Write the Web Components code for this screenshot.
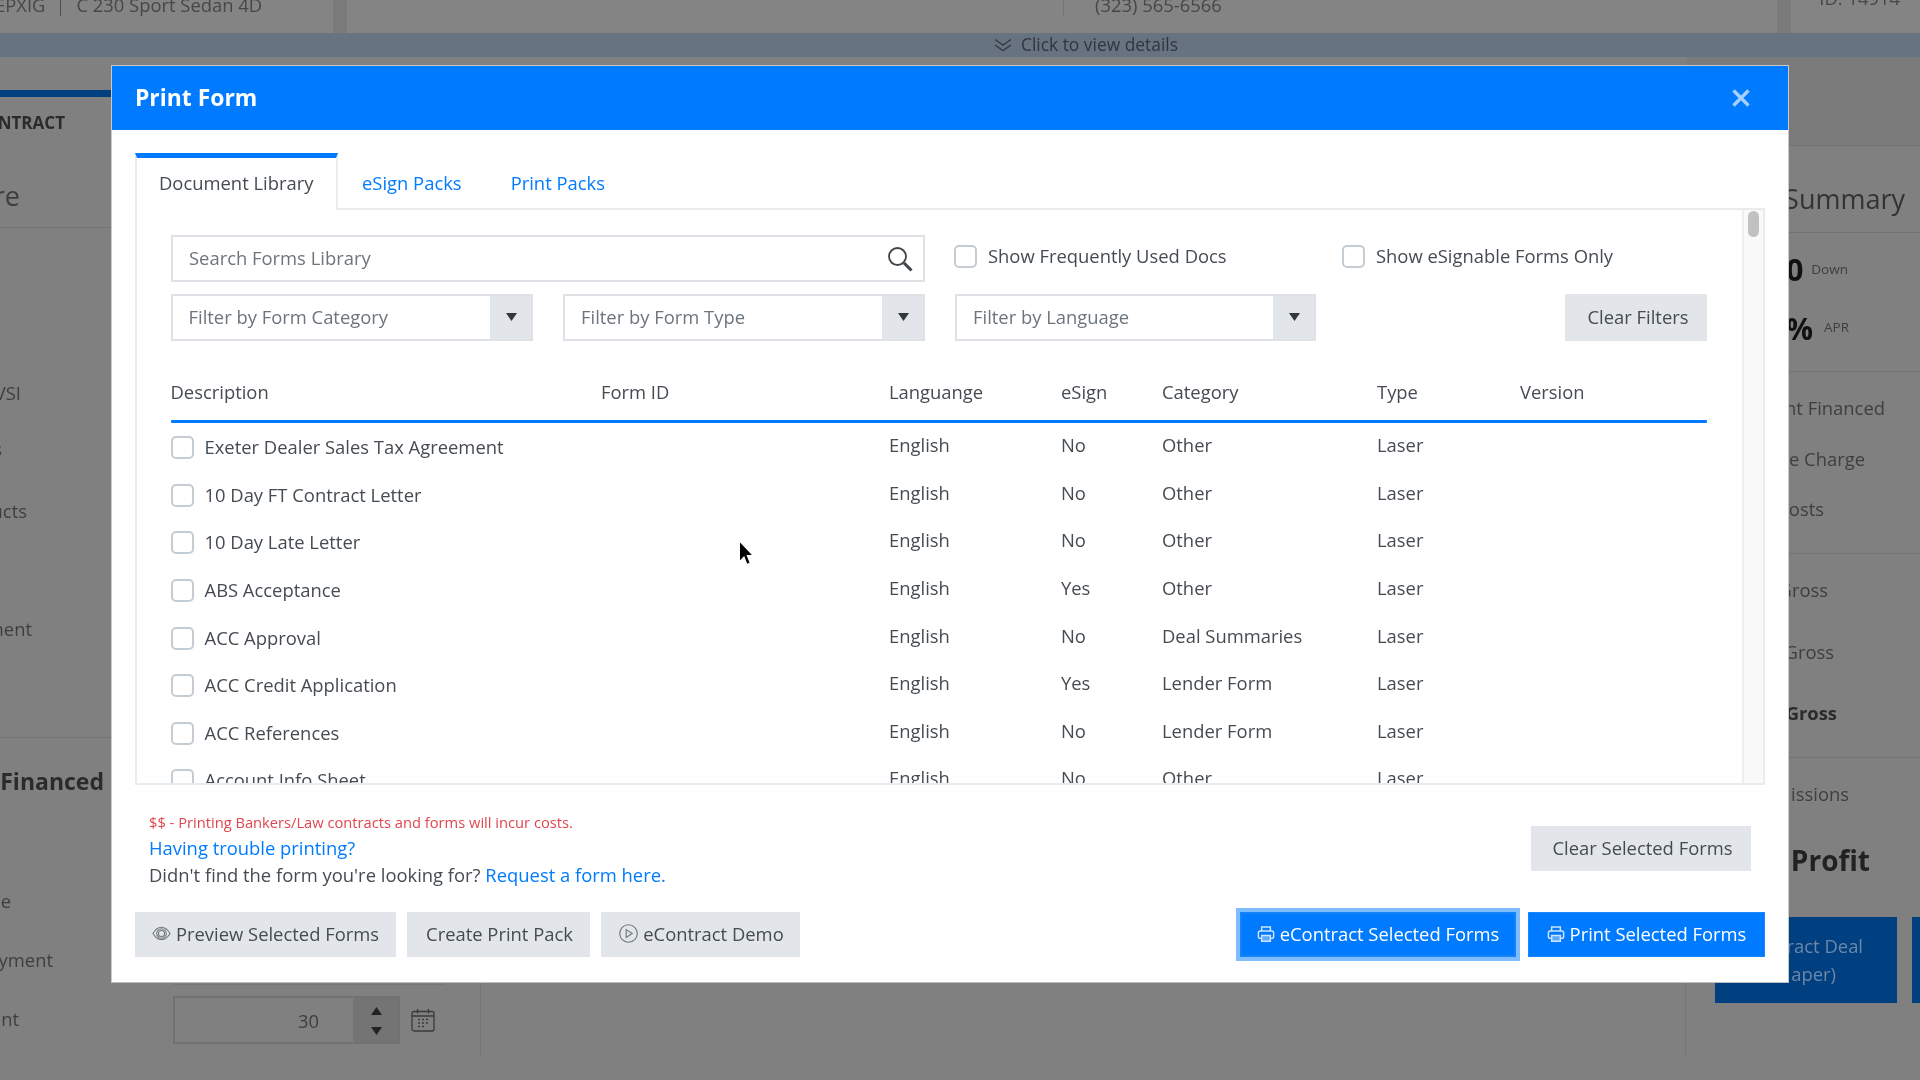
<!DOCTYPE html>
<html lang="en"><head><meta charset="utf-8"><title>Print Form</title>
<style>html,body{margin:0;padding:0;background:#808080;overflow:hidden}</style>
</head><body>
<app-shell>
  <bg-top></bg-top>
  <bg-detail>Click to view details</bg-detail>
  <bg-main></bg-main>
  <print-modal></print-modal>
  <mouse-cursor></mouse-cursor>
</app-shell>
<script>
const FONT='"Open Sans","Liberation Sans",sans-serif';
function def(name,css,html,init){
  customElements.define(name,class extends HTMLElement{
    constructor(){super();const s=this.attachShadow({mode:'open'});
      s.innerHTML='<style>'+css+'</style>'+(typeof html==='function'?html(this):html);}
    connectedCallback(){if(init)init(this)}
  });
}
const PRINTER='<svg width="18" height="16" viewBox="0 0 24 22" fill="none" stroke="currentColor" stroke-width="2"><path d="M6 7V1.500h12V7"/><path d="M6 17H4a2.500 2.500 0 0 1-2.500-2.500v-5A2.500 2.500 0 0 1 4 7h16a2.500 2.500 0 0 1 2.500 2.500v5A2.500 2.500 0 0 1 20 17h-2"/><path d="M6 13h12v8H6z" fill="currentColor" fill-opacity=".45"/></svg>';
const EYE='<svg width="19" height="15" viewBox="0 0 20 15" fill="none" stroke="currentColor" stroke-width="1.100"><path d="M1 7.500C4 2.600 7 1 10 1s6 1.600 9 6.500c-3 4.900-6 6.500-9 6.500S4 12.400 1 7.500Z"/><circle cx="10" cy="7.500" r="5"/><circle cx="10" cy="7.500" r="3.200"/></svg>';
const PLAY='<svg width="19" height="19" viewBox="0 0 19 19" fill="none" stroke="currentColor" stroke-width="1.100"><circle cx="9.500" cy="9.500" r="8.800"/><path d="M7.200 5.600l6 3.900-6 3.900z"/></svg>';

def('app-shell',':host{display:block;position:relative;width:1920px;height:1080px;overflow:hidden;background:#808080;font-family:'+FONT+';font-size:18.4px;filter:blur(.6px)}','<slot></slot>');

/* --- dimmed page behind the dialog --- */
def('bg-top',`:host{display:flex;gap:14px;height:33px;background:#7b7b7b;overflow:hidden;color:#474747;font-size:18.4px;white-space:nowrap}
 .card{background:#848484;height:33px;display:flex;align-items:center;overflow:hidden;flex:none}
 .a{width:333px}.b{width:1430px}.c{flex:1;min-width:0;justify-content:flex-end;padding-right:20px;box-sizing:border-box}
 .t{margin-top:-25px;line-height:33px}.sep{width:1px;height:16px;background:#4c4c4c;align-self:flex-start}
 .a .first{margin-left:-5px}.a .sep{margin:0 15px}.b .sep{margin-left:716px;margin-right:31px;background:#757575}
 .c .t{margin-top:-38px}`,
 `<div class="card a"><span class="t first">EPXIG</span><span class="sep"></span><span class="t">C 230 Sport Sedan 4D</span></div>
  <div class="card b"><span class="sep"></span><span class="t">(323) 565-6566</span></div>
  <div class="card c"><span class="t">ID: 14914</span></div>`);

def('bg-detail',`:host{display:flex;justify-content:center;align-items:center;height:24px;background:#677380;color:#2f363d;font-size:17.4px}
 .i{display:flex;align-items:center;gap:9px;margin-left:252px}
 span{padding-bottom:2px}
 svg{flex:none}`,
 `<div class="i"><svg width="18" height="14" viewBox="0 0 18 14" fill="none" stroke="#343b42" stroke-width="1.500"><path d="M1 1.500l8 5.500 8-5.500M1 7l8 5.500L17 7"/></svg><span><slot></slot></span></div>`);

def('bg-row',`:host{display:flex;justify-content:flex-end;align-items:center;height:40px;padding-bottom:2px;overflow:hidden;white-space:nowrap;color:#3e3e3e;flex:none;box-sizing:border-box}
 :host([bold]){font-weight:700;color:#2b2b2b}`,'<slot></slot>');
def('bg-rule',':host{display:block;height:1px;background:#737373;flex:none}','');

def('bg-spin',`:host{display:flex;width:227px;height:48px;box-sizing:border-box;border:2px solid #727272;background:#808080;color:#3e3e3e}
 .v{flex:1;display:flex;align-items:center;justify-content:flex-end;padding-right:34px}
 .a{width:45px;background:#747474;display:flex;flex-direction:column;align-items:center;justify-content:center;gap:12px;padding:2px 0 0 1px;box-sizing:border-box}
 svg{display:block}`,
 `<div class="v"><slot></slot></div><div class="a">
 <svg width="11" height="8" viewBox="0 0 11 8"><path d="M5.500 0L11 8H0z" fill="#222"/></svg>
 <svg width="11" height="8" viewBox="0 0 11 8"><path d="M5.500 8L11 0H0z" fill="#222"/></svg></div>`);

def('bg-main',`:host{display:flex;height:1023px;overflow:hidden}
 .left{width:111px;flex:none;display:flex;flex-direction:column}
 .left bg-row{padding-bottom:4px}
 .form{width:369px;flex:none;box-sizing:border-box;padding:927px 0 0 62px;display:flex;flex-direction:column}
 .form .ln{width:272px;height:1px;background:#777}
 .form .f{display:flex;align-items:center;gap:11px;margin-top:11px}
 .mid{flex:1;height:74px;margin-top:925px;border-left:1px solid #777;border-right:1px solid #777}
 .right{width:234px;flex:none;display:flex;flex-direction:column}
 .cap{height:88px;background:#7b7b7b;flex:none}
 .tab{height:7px;width:100%;background:#003f80;margin-top:33px;flex:none}
 .stat{display:flex;align-items:flex-start;gap:8px;color:#111;font-weight:700;font-size:30px;line-height:40px}
 .stat small{font-size:13.500px;font-weight:400;color:#3e3e3e;line-height:39px}
 .stat small.apr{line-height:37px}
 .btns{display:flex;gap:15px;height:86px;margin:31px 0 0 29px;flex:none}
 .btn{width:182px;background:#003f80;color:#6d88a8;flex:none;display:flex;flex-direction:column;align-items:flex-end;justify-content:center;line-height:28px;box-sizing:border-box;padding-right:34px;white-space:nowrap}
 .btn span:last-child{margin-right:27px}
 .btn.two{width:40px;padding:0}`,
 `<div class="left">
   <div class="tab"></div>
   <bg-row bold style="height:50px;padding-right:46px;padding-bottom:0;font-size:17px">NTRACT</bg-row>
   <bg-row style="margin-top:29px;padding-right:91px;padding-bottom:2px;font-size:27px">re</bg-row>
   <bg-rule style="margin-top:11px"></bg-rule>
   <bg-row style="margin-top:146px;padding-right:90px">VSI</bg-row>
   <bg-row style="margin-top:16px;padding-right:109px">s</bg-row>
   <bg-row style="margin-top:22px;padding-right:84px">ucts</bg-row>
   <bg-row style="margin-top:78px;padding-right:79px">ment</bg-row>
   <bg-rule style="margin-top:87px"></bg-rule>
   <bg-row bold style="margin-top:24px;padding-right:7px;padding-bottom:2px;font-size:23px">Financed</bg-row>
   <bg-row style="margin-top:80px;padding-right:100px">ce</bg-row>
   <bg-row style="margin-top:19px;padding-right:58px">yment</bg-row>
   <bg-row style="margin-top:19px;padding-right:92px">ent</bg-row>
 </div>
 <div class="form"><div class="ln"></div><div class="f"><bg-spin>30</bg-spin>
   <svg width="24" height="24" viewBox="0 0 24 24" fill="none" stroke="#3a3a3a" stroke-width="1.300"><rect x="1" y="3.500" width="22" height="19.500" rx="2"/><path d="M1 8h22M6.500 1v4.500M17.500 1v4.500"/><path d="M7 11.500h2M11 11.500h2M15 11.500h2M7 15h2M11 15h2M15 15h2M7 18.500h2M11 18.500h2" stroke-width="1.600"/></svg></div></div>
 <div class="mid"></div>
 <div class="right">
   <div class="cap"></div><bg-rule></bg-rule>
   <bg-row style="margin-top:33px;height:40px;padding-right:15px;font-size:27px;color:#333">Summary</bg-row>
   <bg-rule style="margin-top:13px"></bg-rule>
   <bg-row style="margin-top:18px;padding-right:72px"><div class="stat"><span>0</span><small>Down</small></div></bg-row>
   <bg-row style="margin-top:19px;padding-right:71px"><div class="stat" style="gap:11px"><span>%</span><small class="apr">APR</small></div></bg-row>
   <bg-rule style="margin-top:21px"></bg-rule>
   <bg-row style="margin-top:16px;padding-right:35px">nt Financed</bg-row>
   <bg-row style="margin-top:11px;padding-right:55px">e Charge</bg-row>
   <bg-row style="margin-top:10px;padding-right:96px">osts</bg-row>
   <bg-rule style="margin-top:24px"></bg-rule>
   <bg-row style="margin-top:16px;padding-right:92px">Gross</bg-row>
   <bg-row style="margin-top:22px;padding-right:86px">Gross</bg-row>
   <bg-row bold style="margin-top:21px;padding-right:83px">Gross</bg-row>
   <bg-rule style="margin-top:24px"></bg-rule>
   <bg-row style="margin-top:16px;padding-right:71px">issions</bg-row>
   <bg-row bold style="margin-top:22px;height:50px;padding-right:50px;font-size:28px;color:#222">Profit</bg-row>
   <div class="btns"><div class="btn"><span>ract Deal</span><span>aper)</span></div><div class="btn two"></div></div>
 </div>`);

/* --- dialog controls --- */
def('ui-btn',`:host{display:inline-flex;align-items:center;justify-content:center;gap:5px;height:45px;box-sizing:border-box;padding-bottom:2px;background:#e2e6ea;color:#454b52;font-size:18.4px;white-space:nowrap;flex:none}
 :host([primary]){background:#007bff;color:#fff;border:1px solid #1a88ff}
 :host([focused]){box-shadow:0 0 0 4px #80bdff;border:2px solid #1583f8}
 ::slotted(svg){flex:none}
 :host([primary]) ::slotted(svg){color:#cfe4fb}
 :host(:not([primary])) ::slotted(svg){color:#6d747b}`,'<slot></slot>');

def('ui-check',`:host{display:inline-flex;align-items:center;gap:11px;color:#454b52;font-size:18.4px;white-space:nowrap}
 i{display:block;width:23px;height:23px;box-sizing:border-box;border:2px solid #c4ccd4;border-radius:5px;background:#fff;flex:none}
 span{padding-bottom:2px}`,'<i></i><span><slot></slot></span>');

def('ui-search',`:host{display:flex;align-items:center;justify-content:space-between;height:47px;box-sizing:border-box;border:2px solid #dee2e6;padding:0 10px 0 16.500px;color:#6c757d;font-size:18.4px;background:#fff}
 span{padding-bottom:2px}`,
 `<span><slot></slot></span><svg width="26" height="26" viewBox="0 0 26 26" fill="none" stroke="#3f4449"><circle cx="10.500" cy="10.500" r="8.500" stroke-width="1.800"/><path d="M17 17l7.500 7.500" stroke-width="3"/></svg>`);

def('ui-select',`:host{display:flex;align-items:stretch;height:47px;box-sizing:border-box;border:2px solid #dee2e6;color:#6c757d;font-size:18.4px;background:#fff}
 .t{flex:1;display:flex;align-items:center;padding:0 0 2px 16px}
 .a{width:41px;background:#e2e6ea;display:flex;align-items:center;justify-content:center;padding:0 0 2px 2px;box-sizing:border-box}`,
 `<div class="t"><slot></slot></div><div class="a"><svg width="11" height="8" viewBox="0 0 11 8"><path d="M0 0h11L5.500 8z" fill="#32373c"/></svg></div>`);

const COLS='430.5px 288px 172px 101px 215px 143px 188px';
def('doc-head',`:host{display:grid;grid-template-columns:${COLS};height:49px;padding-bottom:9px;box-sizing:border-box;margin-top:30px;align-items:center;color:#454b52;font-size:18.4px}`,
 `<span>Description</span><span>Form ID</span><span>Languange</span><span>eSign</span><span>Category</span><span>Type</span><span>Version</span>`);

def('doc-row',`:host{display:grid;grid-template-columns:${COLS};height:47.6px;align-items:center;color:#454b52;font-size:18.4px;white-space:nowrap}
 span{padding-bottom:6px}ui-check{align-self:center}`,
 e=>`<ui-check>${e.getAttribute('desc')}</ui-check><span></span><span>English</span><span>${e.getAttribute('esign')}</span><span>${e.getAttribute('cat')}</span><span>Laser</span><span></span>`);

def('doc-pane',`:host{display:flex;height:575px;box-sizing:border-box;border:solid #e9ecef;border-width:0 2px 2px 2px;overflow:hidden;background:#fff}
 .c{flex:1;min-width:0;padding:25px 35px 0 33.5px;overflow:hidden}
 .s{width:21px;flex:none;box-sizing:border-box;background:#f9f9f9;border-left:2px solid #eeeeef;padding:1px 4px}
 .s i{display:block;height:26px;width:11px;border-radius:6px;background:#c1c1c1}
 .r1{display:grid;grid-template-columns:754.5px 1fr;column-gap:29px}
 .chk{display:flex;padding-top:8px;align-items:flex-start}
 .chk ui-check:first-child{width:388px}
 .r2{display:grid;grid-template-columns:362.5px 362px 361px 1fr;column-gap:30px;margin-top:12px}
 .r2 ui-btn{justify-self:end;height:47px;width:142px;padding-left:4px}
 .line{height:3px;background:#007bff;border-radius:1px;margin-bottom:1px}`,
 `<div class="c">
  <div class="r1"><ui-search>Search Forms Library</ui-search><div class="chk"><ui-check>Show Frequently Used Docs</ui-check><ui-check>Show eSignable Forms Only</ui-check></div></div>
  <div class="r2"><ui-select>Filter by Form Category</ui-select><ui-select>Filter by Form Type</ui-select><ui-select>Filter by Language</ui-select><ui-btn>Clear Filters</ui-btn></div>
  <doc-head></doc-head><div class="line"></div>
  <doc-row desc="Exeter Dealer Sales Tax Agreement" esign="No" cat="Other"></doc-row>
  <doc-row desc="10 Day FT Contract Letter" esign="No" cat="Other"></doc-row>
  <doc-row desc="10 Day Late Letter" esign="No" cat="Other"></doc-row>
  <doc-row desc="ABS Acceptance" esign="Yes" cat="Other"></doc-row>
  <doc-row desc="ACC Approval" esign="No" cat="Deal Summaries"></doc-row>
  <doc-row desc="ACC Credit Application" esign="Yes" cat="Lender Form"></doc-row>
  <doc-row desc="ACC References" esign="No" cat="Lender Form"></doc-row>
  <doc-row desc="Account Info Sheet" esign="No" cat="Other"></doc-row>
 </div><div class="s"><i></i></div>`);

def('tab-strip',`:host{display:flex;height:57px;box-sizing:border-box;border-bottom:2px solid #e9ecef;font-size:18.4px}
 .t{display:flex;align-items:center;padding:4px 24px 0;color:#007bff;white-space:nowrap}
 .on{box-sizing:border-box;height:57px;color:#454b52;background:#fff;border-top:5px solid #007bff;border-left:2px solid #e9ecef;border-right:2px solid #e9ecef;padding:0 22px 3px;width:203px}
 .on+.t{padding-right:25px}`,
 `<div class="t on">Document Library</div><div class="t">eSign Packs</div><div class="t">Print Packs</div>`);

def('print-modal',`:host{position:absolute;left:111px;top:65px;width:1678px;height:918px;box-sizing:border-box;border:1px solid #c9c9c9;border-bottom-color:#bdbdbd;background:#fff;display:flex;flex-direction:column}
 header{height:64px;flex:none;background:#007bff;color:#fff;display:flex;align-items:center;justify-content:space-between;padding:0 38px 2px 23px;box-sizing:border-box;font-weight:700;font-size:22.9px}
 header svg{margin-top:2px}
 .body{padding:23px 23px 0;flex:1;display:flex;flex-direction:column}
 .foot{display:flex;justify-content:space-between;align-items:flex-start;margin-top:24px;padding:0 14px}
 .notes div{line-height:26px;white-space:nowrap;color:#454b52}
 .notes .red{color:#e0464f;font-size:14.700px}
 .notes a{color:#007bff;text-decoration:none}
 .foot ui-btn{margin-top:17px;width:220px;padding-left:3px}
 .acts{display:flex;justify-content:space-between;margin-top:24px}
 .g{display:flex;gap:11px}.g.r{gap:12px}`,
 `<header><span>Print Form</span><svg width="18" height="18" viewBox="0 0 18 18" stroke="#a6d0ff" stroke-width="3.400"><path d="M1.500 1.500l15 15M16.500 1.500l-15 15"/></svg></header>
 <div class="body"><tab-strip></tab-strip><doc-pane></doc-pane>
  <div class="foot"><div class="notes"><div class="red">$$ - Printing Bankers/Law contracts and forms will incur costs.</div><div><a>Having trouble printing?</a></div><div style="line-height:27px">Didn't find the form you're looking for? <a>Request a form here.</a></div></div>
   <ui-btn>Clear Selected Forms</ui-btn></div>
  <div class="acts"><div class="g"><ui-btn style="width:261px">${EYE}Preview Selected Forms</ui-btn><ui-btn style="width:183px;padding-left:2px">Create Print Pack</ui-btn><ui-btn style="width:199px;padding-left:2px">${PLAY}eContract Demo</ui-btn></div>
  <div class="g r"><ui-btn primary focused style="width:276px">${PRINTER}eContract Selected Forms</ui-btn><ui-btn primary style="width:237px">${PRINTER}Print Selected Forms</ui-btn></div></div>
 </div>`);

def('mouse-cursor',':host{position:absolute;left:738px;top:540px;width:16px;height:27px}svg{display:block}',
 '<svg width="16" height="27" viewBox="0 0 16 25" preserveAspectRatio="none"><path d="M1.500 1v19l4.500-4.300 3 7 3.200-1.400-3-6.800h6z" fill="#000" stroke="#fff" stroke-width="1"/></svg>');
</script>
</body></html>
